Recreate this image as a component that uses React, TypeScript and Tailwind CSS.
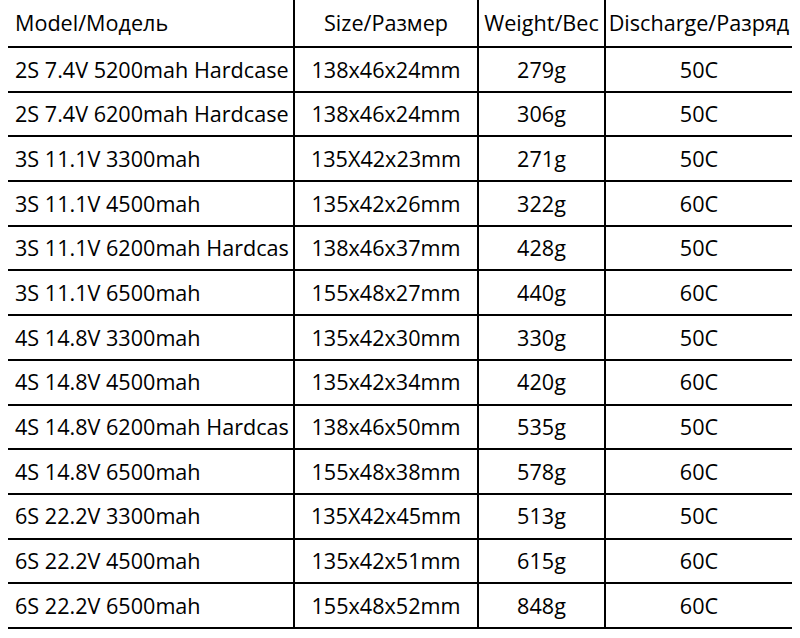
import React from "react";

const rows: [string, string, string, string][] = [
  ["2S 7.4V 5200mah Hardcase", "138x46x24mm", "279g", "50C"],
  ["2S 7.4V 6200mah Hardcase", "138x46x24mm", "306g", "50C"],
  ["3S 11.1V 3300mah", "135X42x23mm", "271g", "50C"],
  ["3S 11.1V 4500mah", "135x42x26mm", "322g", "60C"],
  ["3S 11.1V 6200mah Hardcas", "138x46x37mm", "428g", "50C"],
  ["3S 11.1V 6500mah", "155x48x27mm", "440g", "60C"],
  ["4S 14.8V 3300mah", "135x42x30mm", "330g", "50C"],
  ["4S 14.8V 4500mah", "135x42x34mm", "420g", "60C"],
  ["4S 14.8V 6200mah Hardcas", "138x46x50mm", "535g", "50C"],
  ["4S 14.8V 6500mah", "155x48x38mm", "578g", "60C"],
  ["6S 22.2V 3300mah", "135X42x45mm", "513g", "50C"],
  ["6S 22.2V 4500mah", "135x42x51mm", "615g", "60C"],
  ["6S 22.2V 6500mah", "155x48x52mm", "848g", "60C"],
];

function Row({ cells, header }: { cells: string[]; header?: boolean }) {
  return (
    <div
      className={
        "flex border-b-2 border-black " + (header ? "h-[48px]" : "h-[44.7px]")
      }
    >
      <div className="w-[287px] shrink-0 border-r-2 border-black flex items-center pl-[7px] overflow-hidden whitespace-nowrap">
        {cells[0]}
      </div>
      <div className="w-[184px] shrink-0 border-r-2 border-black flex items-center justify-center overflow-hidden whitespace-nowrap">
        {cells[1]}
      </div>
      <div className="w-[127px] shrink-0 border-r-2 border-black flex items-center justify-center overflow-hidden whitespace-nowrap">
        {cells[2]}
      </div>
      <div className="flex-1 flex items-center justify-center overflow-hidden whitespace-nowrap">
        {cells[3]}
      </div>
    </div>
  );
}

export default function App() {
  return (
    <div
      className="w-[800px] h-[638px] bg-white text-black px-[8px] text-[21.6px] leading-none"
      style={{ fontFamily: '"Open Sans", "Noto Sans", sans-serif' }}
    >
      <div className="w-[784px]">
        <Row
          header
          cells={["Model/Модель", "Size/Размер", "Weight/Вес", "Discharge/Разряд"]}
        />
        {rows.map((r, i) => (
          <Row key={i} cells={r} />
        ))}
      </div>
    </div>
  );
}
